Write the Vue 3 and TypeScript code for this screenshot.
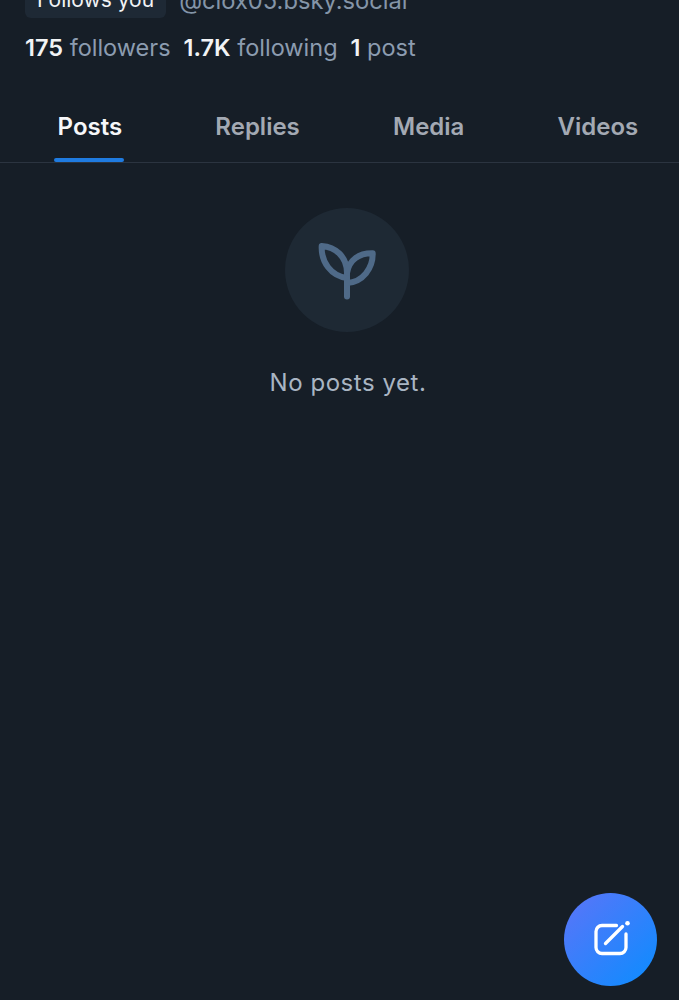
<script setup lang="ts">
type Stat = {
  value: string;
  label: string;
};

const stats: Stat[] = [
  { value: '175', label: 'followers' },
  { value: '1.7K', label: 'following' },
  { value: '1', label: 'post' },
];

const tabs = ['Posts', 'Replies', 'Media', 'Videos'];
</script>

<template>
  <div class="page">
    <div class="profile">
      <div class="handle-row">
        <span class="badge">Follows you</span>
        <span class="handle">@clox05.bsky.social</span>
      </div>
      <div class="stats">
        <span v-for="stat in stats" :key="stat.label" class="stat">
          <b>{{ stat.value }}</b> {{ stat.label }}
        </span>
      </div>
    </div>

    <div class="tabs">
      <div v-for="(tab, i) in tabs" :key="tab" class="tab" :class="{ active: i === 0 }">
        <span class="tab-label">{{ tab }}</span>
      </div>
    </div>

    <div class="empty">
      <div class="empty-circle">
        <svg width="60" height="60" viewBox="0 0 60 60" fill="none" stroke="#4f6a88" stroke-width="6" stroke-linecap="round" stroke-linejoin="round">
          <path d="M30 56.5V30" />
          <path d="M30 33C30 16 18 7 4.7 6C4 22 14 36 30 38" />
          <path d="M30 33C32 20 42 13 55.7 13.3C56 28 46 42 30 43" />
        </svg>
      </div>
      <p class="empty-text">No posts yet.</p>
    </div>

    <button class="fab" aria-label="New post">
      <svg width="38" height="38" viewBox="0 0 38 38" fill="none" stroke="#fff" stroke-width="3.3" stroke-linecap="round" stroke-linejoin="round">
        <path d="M24.5 4.5H10a6 6 0 0 0-6 6v16a6 6 0 0 0 6 6h18a6 6 0 0 0 6-6V13" />
        <path d="M13.5 22.5L30.5 5.5" />
        <circle cx="35.5" cy="2.3" r="2.3" fill="#fff" stroke="none" />
      </svg>
    </button>
  </div>
</template>

<style>
html,
body {
  margin: 0;
  background: #161e27;
}
</style>

<style scoped>
.page {
  position: relative;
  width: 679px;
  height: 1000px;
  overflow: hidden;
  background: #161e27;
  font-family: Inter, "Liberation Sans", sans-serif;
}

.profile {
  padding: 0 25px;
  margin-top: -18px;
}

.handle-row {
  display: flex;
  align-items: center;
  gap: 13px;
  height: 36px;
}

.badge {
  display: block;
  padding: 0 12px;
  line-height: 36px;
  border-radius: 6px;
  background: #1e2935;
  color: #f1f3f5;
  font-size: 21px;
}

.handle {
  color: #8495a8;
  font-size: 23.7px;
}

.stats {
  display: flex;
  gap: 13px;
  margin-top: 16px;
  line-height: 28px;
  font-size: 23.5px;
  color: #8c9cb0;
}

.stat b {
  font-weight: 600;
  color: #f1f3f5;
}

.tabs {
  display: flex;
  align-items: flex-start;
  height: 62px;
  margin-top: 38px;
  padding-left: 11px;
  border-bottom: 1px solid #2b3440;
}

.tab {
  padding: 12px 42.6px 0;
  font-size: 24px;
  line-height: 29px;
  font-weight: 600;
  color: #a3a9b3;
}

.tab.active {
  color: #f6f7f9;
}

.tab-label {
  position: relative;
  display: block;
  padding: 0 4px;
}

.tab.active .tab-label::after {
  content: "";
  position: absolute;
  left: 0;
  right: 2px;
  top: 46px;
  height: 4px;
  border-radius: 2px;
  background: #1f7be0;
}

.empty {
  display: flex;
  flex-direction: column;
  align-items: center;
  padding-top: 45px;
  padding-left: 15px;
}

.empty-circle {
  display: flex;
  align-items: center;
  justify-content: center;
  width: 124px;
  height: 124px;
  border-radius: 50%;
  background: #1e2934;
}

.empty-text {
  margin: 36px 0 0 2px;
  font-size: 24px;
  line-height: 29px;
  letter-spacing: 0.55px;
  color: #a9b5c3;
}

.fab {
  position: absolute;
  left: 564px;
  top: 893px;
  width: 93px;
  height: 93px;
  display: flex;
  align-items: center;
  justify-content: center;
  padding: 0;
  border: none;
  border-radius: 50%;
  background: linear-gradient(135deg, #5c74f8, #0a8dff);
}
</style>
